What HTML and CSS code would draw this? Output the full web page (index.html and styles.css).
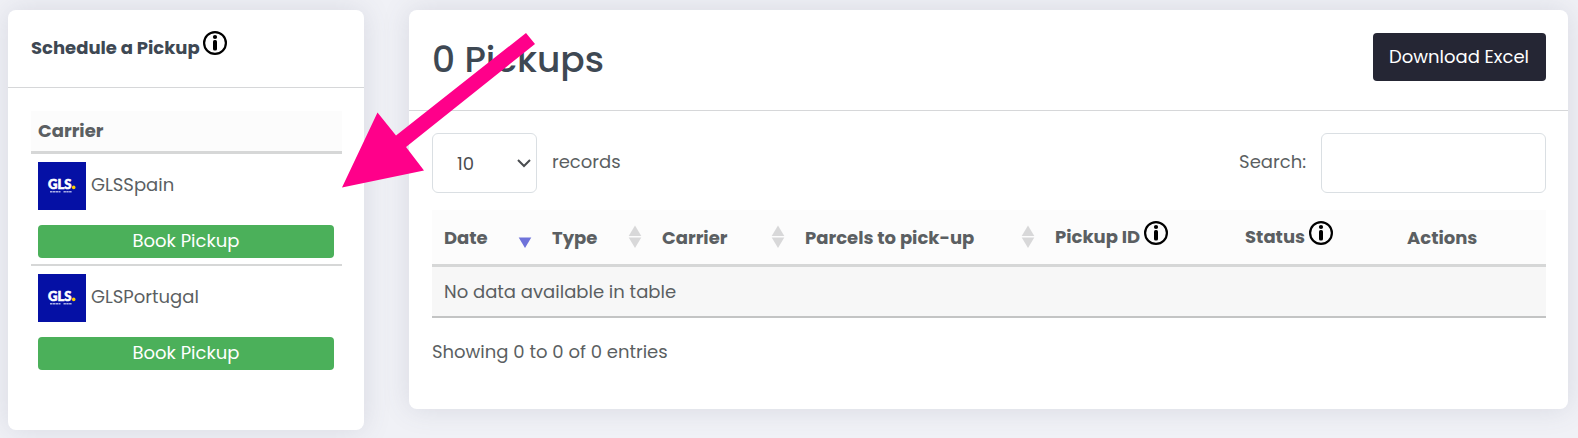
FILE: index.html
```html
<!DOCTYPE html>
<html lang="en">
<head>
<meta charset="utf-8">
<title>Pickups</title>
<link rel="stylesheet" href="styles.css">
</head>
<body>
<svg class="defs" aria-hidden="true">
  <symbol id="info" viewBox="0 0 24 24">
    <circle cx="12" cy="12" r="10.9" fill="none" stroke="#000" stroke-width="2.2"/>
    <circle cx="12" cy="6" r="2.1" fill="#000"/>
    <rect x="10" y="9" width="4" height="10.5" rx="1.6" fill="#000"/>
  </symbol>
  <symbol id="sort" viewBox="0 0 14 24">
    <path class="up" d="M7 0.5 L13.3 11 H0.7 Z"/>
    <path class="down" d="M0.7 12.5 H13.3 L7 23 Z"/>
  </symbol>
</svg>
<main class="page">
  <section class="card">
    <header class="card-head schedule-head">
      <h2 class="card-title">Schedule a Pickup</h2>
      <svg class="info" role="img" aria-label="Info"><use href="#info"/></svg>
    </header>
    <div class="card-body">
      <table class="carriers">
        <thead><tr><th scope="col">Carrier</th></tr></thead>
        <tbody>
          <tr><td>
            <div class="carrier">
              <svg class="logo" viewBox="0 0 48 48" aria-hidden="true">
                <text class="logo-text" x="10" y="27">GLS</text>
                <circle cx="35.7" cy="25.4" r="1.8" fill="#ffd100"/>
                <path class="logo-line" d="M12 29.8 H22.5 M25.5 29.8 H34"/>
              </svg>
              <span>GLSSpain</span>
            </div>
            <button class="book" type="button">Book Pickup</button>
          </td></tr>
          <tr><td>
            <div class="carrier">
              <svg class="logo" viewBox="0 0 48 48" aria-hidden="true">
                <text class="logo-text" x="10" y="27">GLS</text>
                <circle cx="35.7" cy="25.4" r="1.8" fill="#ffd100"/>
                <path class="logo-line" d="M12 29.8 H22.5 M25.5 29.8 H34"/>
              </svg>
              <span>GLSPortugal</span>
            </div>
            <button class="book" type="button">Book Pickup</button>
          </td></tr>
        </tbody>
      </table>
    </div>
  </section>

  <section class="card">
    <header class="card-head pickups-head">
      <h1 class="count">0 Pickups</h1>
      <button class="download" type="button">Download Excel</button>
    </header>
    <div class="card-body pickups-body">
      <div class="toolbar">
        <label class="field">
          <span class="select-wrap">
            <select class="control length"><option>10</option><option>25</option><option>50</option></select>
            <svg class="chevron" viewBox="0 0 14 8" aria-hidden="true"><path d="M1 1 L7 7 L13 1"/></svg>
          </span>
          <span class="field-text">records</span>
        </label>
        <label class="field"><span class="field-text">Search:</span><input class="control search" type="search"></label>
      </div>
      <table class="pickups">
        <colgroup><col class="c-date"><col class="c-type"><col class="c-carrier"><col class="c-parcels"><col class="c-id"><col class="c-status"><col class="c-actions"></colgroup>
        <thead>
          <tr>
            <th scope="col"><div class="th sorted"><span>Date</span><svg class="sort" aria-hidden="true"><use href="#sort"/></svg></div></th>
            <th scope="col"><div class="th"><span>Type</span><svg class="sort" aria-hidden="true"><use href="#sort"/></svg></div></th>
            <th scope="col"><div class="th"><span>Carrier</span><svg class="sort" aria-hidden="true"><use href="#sort"/></svg></div></th>
            <th scope="col"><div class="th"><span>Parcels to pick-up</span><svg class="sort" aria-hidden="true"><use href="#sort"/></svg></div></th>
            <th scope="col"><div class="th-info"><span>Pickup ID</span><svg class="info" role="img" aria-label="Info"><use href="#info"/></svg></div></th>
            <th scope="col"><div class="th-info"><span>Status</span><svg class="info" role="img" aria-label="Info"><use href="#info"/></svg></div></th>
            <th scope="col"><div class="th"><span>Actions</span></div></th>
          </tr>
        </thead>
        <tbody><tr><td colspan="7">No data available in table</td></tr></tbody>
      </table>
      <p class="summary">Showing 0 to 0 of 0 entries</p>
    </div>
  </section>
</main>
<svg class="pointer" viewBox="0 0 194 156" aria-hidden="true"><path d="M0 154.5 L35.5 79.5 L54 102.5 L184 0 L193 11 L64 114 L82 137.5 Z"/></svg>
</body>
</html>
```
FILE: styles.css
```css
* { box-sizing: border-box; }

body {
  position: relative;
  margin: 0;
  background: #f0f1f6;
  color: #5b5f62;
  font: 400 18px/28px Poppins, Inter, sans-serif;
}

button, input, select { font: inherit; color: inherit; }

table { width: 100%; border-collapse: separate; border-spacing: 0; }
th { font-weight: 700; text-align: left; }
th, td { padding: 0; }

.defs { position: absolute; width: 0; height: 0; }

.page {
  display: grid;
  grid-template-columns: 356fr 1159fr;
  gap: 45px;
  align-items: start;
  padding: 10px 10px 8px 8px;
}

.card {
  min-width: 0;
  background: #fff;
  border-radius: 8px;
  box-shadow: 0 0 28px rgba(82, 88, 115, 0.15);
}

.card-head { display: flex; border-bottom: 1px solid #d6d7d9; }
.card-body { padding: 23px 22px 40px 23px; }
.pickups-body { padding-top: 22px; padding-bottom: 43px; }

.schedule-head { gap: 3px; align-items: flex-start; padding: 21px 23px 25px; }
.card-title { margin: 0; padding-top: 3px; color: #3e4853; font-size: 18px; line-height: 28px; font-weight: 700; }
.info { flex: none; width: 24px; height: 24px; }

.carriers { margin-bottom: 14px; }
.carriers th { padding: 6px 7px; background: #fcfcfc; border-bottom: 3px solid #d6d7d7; }
.carriers td { padding: 8px 8px 6px 7px; }
.carriers tbody tr:not(:last-child) td { border-bottom: 2px solid #d6d7d7; }
.carrier { display: flex; align-items: center; gap: 5px; margin-bottom: 15px; }
.carrier span { margin-bottom: 2px; }
.logo { width: 48px; height: 48px; background: #0510a5; }
.logo-text { font: 900 13px Lato, sans-serif; fill: #fff; stroke: #fff; stroke-width: 0.6; }
.logo-line { stroke: #a9aee6; stroke-width: 1.4; stroke-dasharray: 2.4 0.4; }
.book {
  display: block;
  width: 100%;
  padding: 2px 8px 3px;
  border: 0;
  border-radius: 4px;
  background: #4bb05a;
  color: #fff;
}

.pickups-head { justify-content: space-between; align-items: flex-start; padding: 23px 22px 26px 23px; }
.count { margin: 0; padding-top: 3px; color: #3e4853; font-size: 36px; line-height: 48px; font-weight: 500; }
.download {
  padding: 10px 17px 10px 16px;
  border: 0;
  border-radius: 4px;
  background: #252634;
  color: #fff;
}

.toolbar { display: flex; justify-content: space-between; margin-bottom: 17px; }
.field { display: flex; align-items: center; gap: 15px; }
.field-text { padding-bottom: 2px; }
.control {
  height: 60px;
  border: 1px solid #dadfe3;
  border-radius: 6px;
  background: #fff;
  color: #4a4d50;
}
.select-wrap { position: relative; display: flex; }
.length { width: 105px; padding: 2px 24px 0; appearance: none; }
.chevron {
  position: absolute;
  right: 6px;
  top: 26px;
  width: 14px;
  height: 8px;
  overflow: visible;
  fill: none;
  stroke: #4a4d50;
  stroke-width: 2;
  pointer-events: none;
}
.search { width: 225px; padding: 0 16px; }

.pickups { table-layout: fixed; }
.pickups th { height: 57px; padding: 0 8px 0 12px; background: #fcfcfc; border-bottom: 3px solid #d6d7d7; white-space: nowrap; }
.pickups td { padding: 11px 12px 10px; background: #f7f7f7; border-bottom: 2px solid #c3c4c4; }
.c-date { width: 108px; }
.c-type { width: 110px; }
.c-carrier { width: 143px; }
.c-parcels { width: 250px; }
.c-id { width: 190px; }
.c-status { width: 162px; }
.c-actions { width: 151px; }
.th { display: flex; align-items: center; justify-content: space-between; }
.th span { padding-top: 2px; }
.th-info { display: flex; align-items: flex-start; gap: 4px; padding-bottom: 3px; }
.th-info span { padding-top: 2px; }
.sort { width: 14px; height: 24px; fill: #d8d8d9; }
.sorted .sort { fill: #6f73da; clip-path: inset(12px 0 0 0); }

.summary { margin: 20px 0 0; }

.pointer {
  position: absolute;
  left: 342px;
  top: 33px;
  width: 194px;
  height: 156px;
  fill: #ff008a;
  pointer-events: none;
}
```
